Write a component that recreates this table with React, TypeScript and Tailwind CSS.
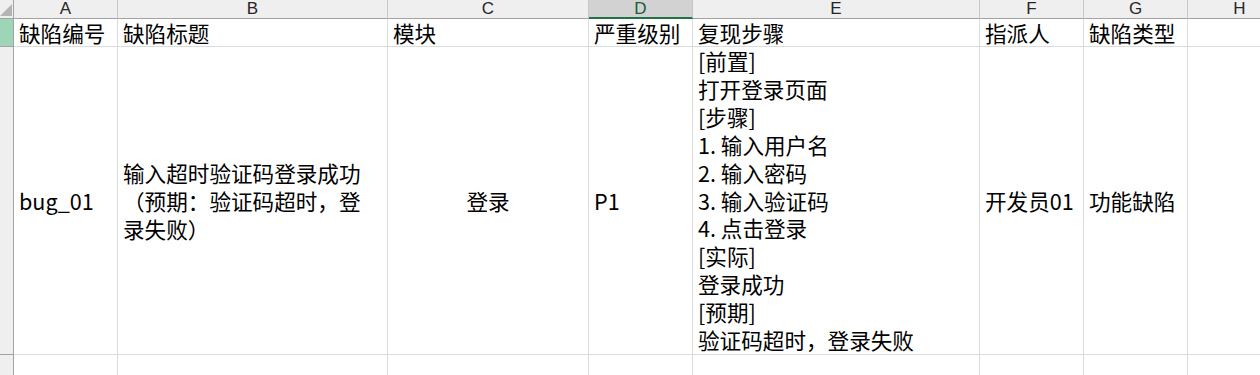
import React from "react";

const cols = ["A", "B", "C", "D", "E", "F", "G", "H"];

const headers = ["缺陷编号", "缺陷标题", "模块", "严重级别", "复现步骤", "指派人", "缺陷类型", ""];

const steps = [
  "[前置]",
  "打开登录页面",
  "[步骤]",
  "1. 输入用户名",
  "2. 输入密码",
  "3. 输入验证码",
  "4. 点击登录",
  "[实际]",
  "登录成功",
  "[预期]",
  "验证码超时，登录失败",
];

const cell = "border-r border-b border-[#dcdcdc] px-[5px] whitespace-nowrap";

const App = () => {
  return (
    <div className="w-[1260px] h-[375px] overflow-hidden bg-white text-black font-['Noto_Sans_CJK_SC',sans-serif] text-[21.6px] leading-[28px]">
      <div className="grid grid-cols-[14px_104px_270px_201px_104px_287px_104px_104px_104px] grid-rows-[19px_28px_308px_40px] w-max">
        {/* corner */}
        <div className="relative bg-[#efefef] border-r border-b border-[#a3a3a3]">
          <svg className="absolute right-[1px] bottom-[2px]" width="12" height="12" viewBox="0 0 12 12">
            <polygon points="12,0 12,12 0,12" fill="#b4b4b4" />
          </svg>
        </div>

        {/* column letters */}
        {cols.map((c) => (
          <div
            key={c}
            className={
              c === "D"
                ? "flex items-center justify-center bg-[#d2d2d2] border-r border-[#c4c4c4] border-b-2 border-b-[#217346] font-['Liberation_Sans',sans-serif] text-[17px] text-[#185c37] leading-none"
                : "flex items-center justify-center bg-[#efefef] border-r border-[#c8c8c8] border-b border-b-[#a3a3a3] font-['Liberation_Sans',sans-serif] text-[17px] text-[#262626] leading-none"
            }
          >
            <span className="-mt-[1px]">{c}</span>
          </div>
        ))}

        {/* row 1 */}
        <div className="bg-[#9fd5b7] border-r border-b border-[#a3a3a3]" />
        {headers.map((h, i) => (
          <div key={i} className={`${cell} flex items-center leading-[27px]`}>
            {h}
          </div>
        ))}

        {/* row 2 */}
        <div className="bg-[#efefef] border-r border-b border-[#a3a3a3]" />
        <div className={`${cell} flex items-center`}>bug_01</div>
        <div className={`${cell} flex flex-col justify-center`}>
          <span>输入超时验证码登录成功</span>
          <span>（预期：验证码超时，登</span>
          <span>录失败）</span>
        </div>
        <div className={`${cell} flex items-center justify-center`}>登录</div>
        <div className={`${cell} flex items-center`}>P1</div>
        <div className={`${cell} flex flex-col justify-center leading-[27.9px]`}>
          {steps.map((s, i) => (
            <span key={i}>{s}</span>
          ))}
        </div>
        <div className={`${cell} flex items-center`}>开发员01</div>
        <div className={`${cell} flex items-center`}>功能缺陷</div>
        <div className={cell} />

        {/* row 3 */}
        <div className="bg-[#efefef] border-r border-b border-[#a3a3a3]" />
        {cols.map((c) => (
          <div key={c} className={cell} />
        ))}
      </div>
    </div>
  );
};

export default App;
